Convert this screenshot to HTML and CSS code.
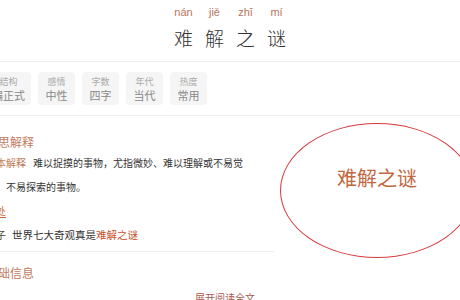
FILE: index.html
```html
<!DOCTYPE html>
<html lang="zh">
<head>
  <meta charset="UTF-8">
  <title>难解之谜</title>
  <link rel="stylesheet" href="styles.css">
</head>
<body>
  <div class="page">
    <div class="head">
      <div class="word">
        <div class="cell"><span class="py">nán</span><span class="zi">难</span></div>
        <div class="cell"><span class="py">jiě</span><span class="zi">解</span></div>
        <div class="cell"><span class="py">zhī</span><span class="zi">之</span></div>
        <div class="cell"><span class="py">mí</span><span class="zi">谜</span></div>
      </div>
    </div>

    <div class="tags">
      <div class="tag"><span class="k">结构</span><span class="v">偏正式</span></div>
      <div class="tag"><span class="k">感情</span><span class="v">中性</span></div>
      <div class="tag"><span class="k">字数</span><span class="v">四字</span></div>
      <div class="tag"><span class="k">年代</span><span class="v">当代</span></div>
      <div class="tag"><span class="k">热度</span><span class="v">常用</span></div>
    </div>

    <div class="main">
      <div class="left">
        <div class="section">
          <h3>意思解释</h3>
          <p class="desc"><span class="label">基本解释</span>难以捉摸的事物，尤指微妙、难以理解或不易觉不易探索的事物。</p>
          <p class="line"><span class="link">出处</span></p>
          <p class="line"><span class="label dark">例子</span><span class="ex">世界七大奇观真是<em>难解之谜</em></span></p>
        </div>
        <h3 class="next">基础信息</h3>
      </div>
      <div class="right">
        <div class="seal">难解之谜</div>
      </div>
    </div>

    <div class="more">展开阅读全文</div>
  </div>
</body>
</html>
```

FILE: styles.css
```css
body {
  margin: 0;
  width: 460px;
  height: 300px;
  overflow: hidden;
  background: #fff;
  font-family: "Noto Sans CJK SC", "Liberation Sans", sans-serif;
  color: #333;
}
.page {
  width: 488px;
  margin-left: -14px;
}
.head {
  height: 61px;
  border-bottom: 1px solid #eee;
}
.word {
  display: flex;
  justify-content: center;
}
.cell {
  width: 31px;
  display: flex;
  flex-direction: column;
  align-items: center;
}
.py {
  padding-top: 4px;
  font-family: "Liberation Sans", sans-serif;
  font-size: 11px;
  line-height: 16px;
  color: #bb7560;
}
.zi {
  margin-top: 4px;
  font-size: 19px;
  font-weight: 300;
  line-height: 28px;
  color: #333;
}
.tags {
  display: flex;
  gap: 7px;
  padding: 10px 0;
  border-bottom: 1px solid #eee;
}
.tag {
  height: 33px;
  min-width: 37px;
  padding: 0 6px;
  box-sizing: border-box;
  background: #f5f5f5;
  border-radius: 4px;
  display: flex;
  flex-direction: column;
  align-items: center;
  justify-content: center;
}
.tag .k {
  font-size: 9px;
  line-height: 13px;
  color: #aaa;
}
.tag .v {
  font-size: 11px;
  line-height: 15px;
  color: #888;
}
.main {
  display: flex;
}
.left {
  width: 291px;
}
.section {
  padding-top: 17px;
  padding-bottom: 4px;
  border-bottom: 1px solid #eee;
}
h3 {
  margin: 0;
  font-size: 12px;
  font-weight: normal;
  line-height: 18px;
  color: #c27a60;
}
h3.next {
  margin-top: 12px;
}
p {
  margin: 0;
  font-size: 10px;
  line-height: 24px;
}
.desc {
  padding-left: 20px;
  padding-right: 30px;
  text-indent: -20px;
  color: #333;
}
.label {
  display: inline-block;
  text-indent: 0;
  margin-right: 7px;
  color: #c27a55;
}
.label.dark {
  color: #444;
  margin-right: 6px;
}
.link {
  color: #c4703d;
  text-decoration: underline;
  text-underline-offset: 2px;
}
.ex {
  font-size: 10.5px;
}
.ex em {
  font-style: normal;
  color: #c8502a;
}
.right {
  flex: 1;
  padding-top: 7px;
  padding-left: 6px;
}
.seal {
  width: 194px;
  height: 135px;
  box-sizing: border-box;
  border: 1.5px solid #d8393e;
  border-radius: 50%;
  display: flex;
  align-items: center;
  justify-content: center;
  padding-bottom: 26px;
  font-size: 20px;
  color: #c2683f;
}
.more {
  margin-top: 8px;
  padding-right: 10px;
  text-align: center;
  font-size: 10px;
  line-height: 16px;
  color: #a85a55;
}
```
